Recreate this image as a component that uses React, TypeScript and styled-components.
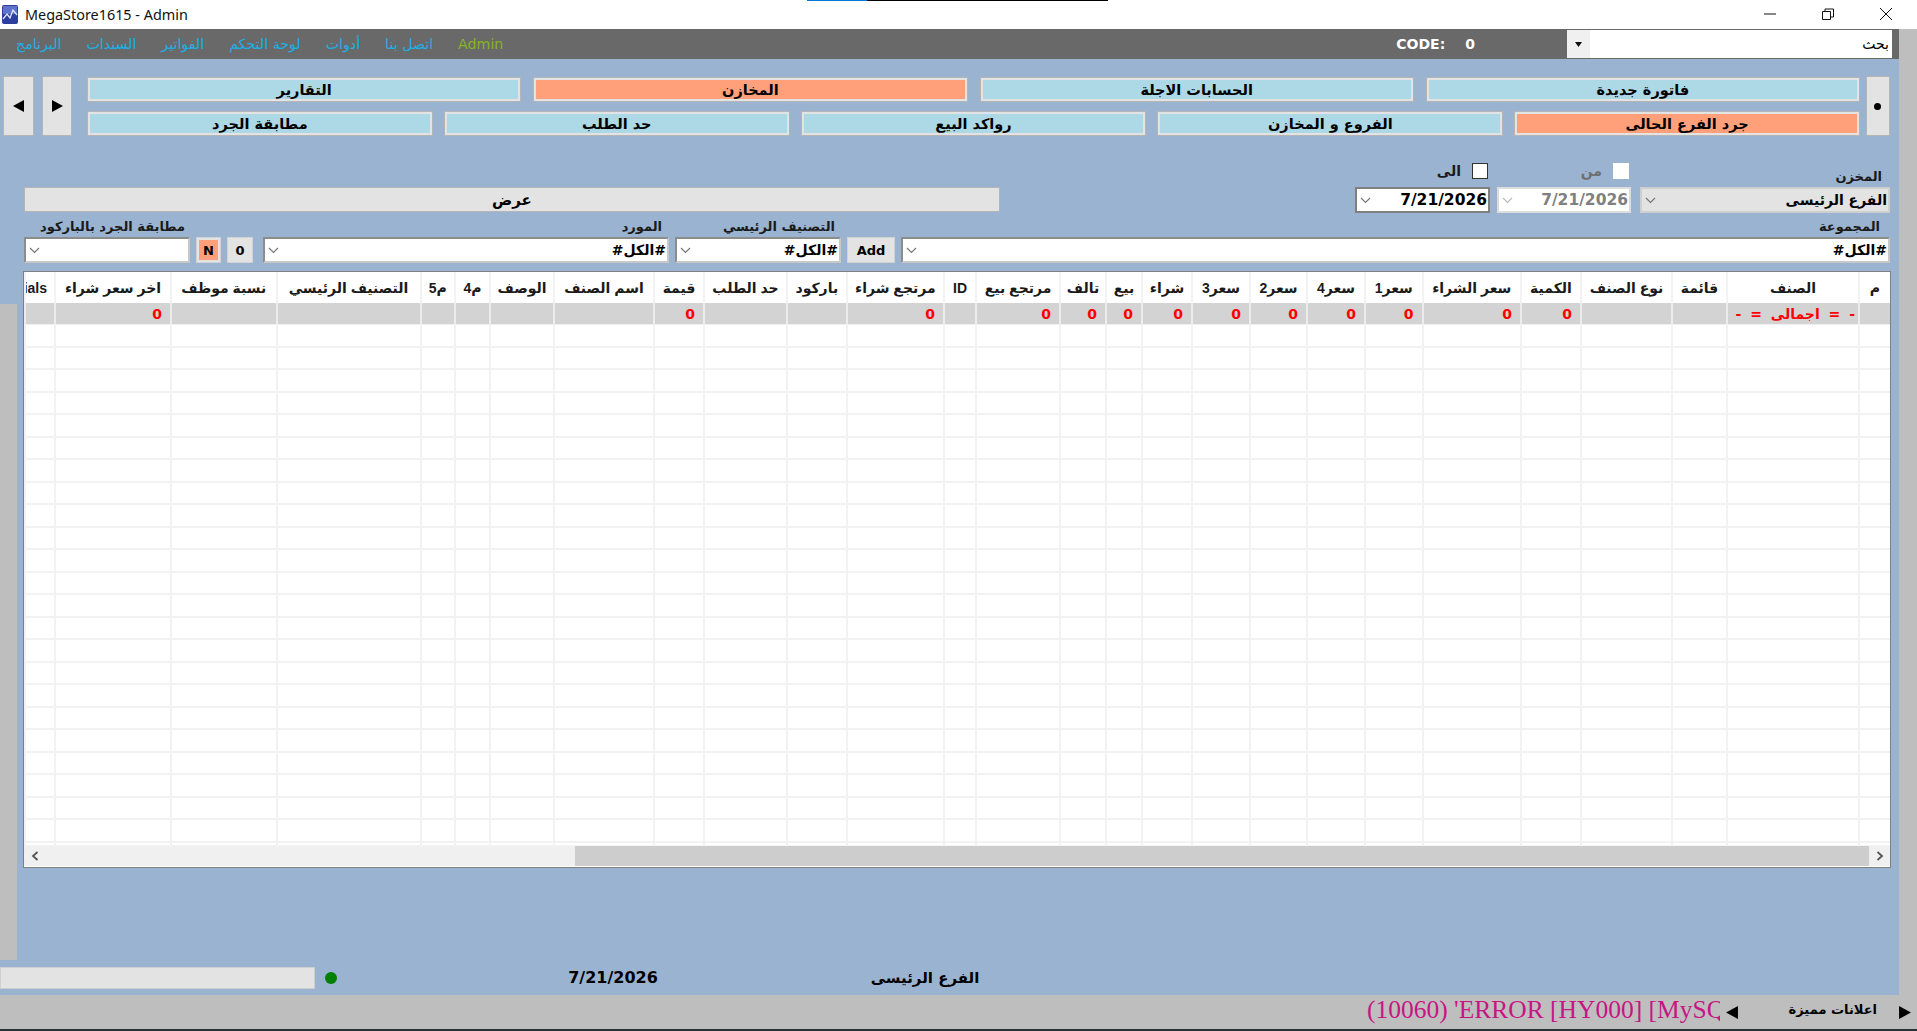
import React from 'react'
import styled, { createGlobalStyle } from 'styled-components'

const UI_FONT = '"DejaVu Sans", "Noto Sans", sans-serif'

// column widths, right to left like the grid on screen
const COLUMNS: { title: string; width: number; total?: string; inset?: number }[] = [
  { title: 'م', width: 32 },
  { title: 'الصنف', width: 132, total: '- = اجمالى = -' },
  { title: 'قائمة', width: 55 },
  { title: 'نوع الصنف', width: 91 },
  { title: 'الكمية', width: 60, total: '0' },
  { title: 'سعر الشراء', width: 98.5, total: '0' },
  { title: 'سعر1', width: 57.5, total: '0' },
  { title: 'سعر4', width: 58, total: '0' },
  { title: 'سعر2', width: 57, total: '0' },
  { title: 'سعر3', width: 58, total: '0' },
  { title: 'شراء', width: 50, total: '0' },
  { title: 'بيع', width: 36, total: '0' },
  { title: 'تالف', width: 46, total: '0' },
  { title: 'مرتجع بيع', width: 84, total: '0' },
  { title: 'ID', width: 32 },
  { title: 'مرتجع شراء', width: 97.4, total: '0' },
  { title: 'باركود', width: 59.6 },
  { title: 'حد الطلب', width: 83 },
  { title: 'قيمة', width: 50, total: '0' },
  { title: 'اسم الصنف', width: 100 },
  { title: 'الوصف', width: 64 },
  { title: 'م4', width: 35 },
  { title: 'م5', width: 34.5 },
  { title: 'التصنيف الرئيسي', width: 144 },
  { title: 'نسبة موظف', width: 105.5 },
  { title: 'اخر سعر شراء', width: 116, total: '0' },
  { title: 'Materials', width: 30, inset: 7 },
]

const GRID_TEMPLATE = COLUMNS.map((c) => `${c.width}px`).join(' ')
const EMPTY_ROWS = Array.from({ length: 24 }, (_, i) => i)

const MENU = ['البرنامج', 'السندات', 'الفواتير', 'لوحة التحكم', 'أدوات', 'اتصل بنا']

const Chevron = ({ tone = '#777' }: { tone?: string }) => (
  <svg width="11" height="7" viewBox="0 0 11 7" fill="none">
    <path d="M1 1l4.5 4.5L10 1" stroke={tone} strokeWidth="1.2" />
  </svg>
)

const Triangle = ({ left, size = 11 }: { left?: boolean; size?: number }) => (
  <svg width={size} height={size + 1} viewBox="0 0 11 12">
    <path d={left ? 'M11 0v12L0 6z' : 'M0 0v12l11-6z'} fill="#000" />
  </svg>
)

const App = () => {
  return (
    <Page>
      <GlobalStyle />
      <TitleBar>
        <ProgressMark />
        <svg width="16" height="19" viewBox="0 0 16 19">
          <rect width="16" height="19" rx="2" fill="#2d3f9e" />
          <rect x="1" y="1" width="14" height="8" fill="#5f73c9" />
          <path d="M1 14l4-5 3 4 3-8 4 5" stroke="#dfe6ff" strokeWidth="1.3" fill="none" />
        </svg>
        <AppTitle>MegaStore1615 - Admin</AppTitle>
        <WindowButtons>
          <svg width="14" height="14" viewBox="0 0 14 14">
            <path d="M1 7h12" stroke="#111" />
          </svg>
          <svg width="14" height="14" viewBox="0 0 14 14" fill="none">
            <path d="M1.5 4.5h8v8h-8zM4 4.5V2h8.5v8H9.5" stroke="#111" />
          </svg>
          <svg width="14" height="14" viewBox="0 0 14 14">
            <path d="M1 1l12 12M13 1L1 13" stroke="#111" />
          </svg>
        </WindowButtons>
      </TitleBar>

      <Main>
        <Workspace>
          <MenuBar>
            {MENU.map((item) => (
              <MenuItem key={item}>{item}</MenuItem>
            ))}
            <MenuItem $admin>Admin</MenuItem>
            <CodeBox>
              <span>CODE:</span>
              <span>0</span>
            </CodeBox>
            <SearchBox>
              <SearchArrow>
                <svg width="7" height="5" viewBox="0 0 7 5">
                  <path d="M0 0h7L3.5 5z" fill="#111" />
                </svg>
              </SearchArrow>
              <SearchText>بحث</SearchText>
            </SearchBox>
          </MenuBar>

          <Toolbar>
            <NavButton $width={31}>
              <Triangle left />
            </NavButton>
            <NavButton $width={30}>
              <Triangle />
            </NavButton>
            <ButtonRows>
              <ButtonRow $gap={12}>
                <ActionButton>فاتورة جديدة</ActionButton>
                <ActionButton>الحسابات الاجلة</ActionButton>
                <ActionButton $active>المخازن</ActionButton>
                <ActionButton>التقارير</ActionButton>
              </ButtonRow>
              <ButtonRow $gap={11}>
                <ActionButton $active>جرد الفرع الحالى</ActionButton>
                <ActionButton>الفروع و المخازن</ActionButton>
                <ActionButton>رواكد البيع</ActionButton>
                <ActionButton>حد الطلب</ActionButton>
                <ActionButton>مطابقة الجرد</ActionButton>
              </ButtonRow>
            </ButtonRows>
            <SideButton>
              <Bullet />
            </SideButton>
          </Toolbar>

          <DateRow>
            <ShowButton>عرض</ShowButton>
            <Field $width={135} $left="auto">
              <CheckLabel>
                <CheckBox $dark />
                <CheckText>الى</CheckText>
              </CheckLabel>
              <Control $tone="date">
                <DateValue>7/21/2026</DateValue>
                <Chevron />
              </Control>
            </Field>
            <Field $width={134} $left="7px">
              <CheckLabel>
                <CheckBox />
                <CheckText $muted>من</CheckText>
              </CheckLabel>
              <Control $tone="soft">
                <DateValue $muted>7/21/2026</DateValue>
                <Chevron tone="#bbb" />
              </Control>
            </Field>
            <Field $width={250} $left="9px">
              <FieldLabel $pad={8}>المخزن</FieldLabel>
              <Control $tone="grey">
                <Value>الفرع الرئيسى</Value>
                <Chevron />
              </Control>
            </Field>
          </DateRow>

          <FilterRow>
            <Field $width={166}>
              <FieldLabel $pad={5}>مطابقة الجرد بالباركود</FieldLabel>
              <Control>
                <Value />
                <Chevron />
              </Control>
            </Field>
            <SmallButton $width={25} $left={6}>
              <NBadge>N</NBadge>
            </SmallButton>
            <SmallButton $width={26} $left={6}>
              0
            </SmallButton>
            <Field $width={406} $left="10px">
              <FieldLabel $pad={7}>المورد</FieldLabel>
              <Control>
                <Value>#الكل#</Value>
                <Chevron />
              </Control>
            </Field>
            <Field $width={166} $left="6px">
              <FieldLabel $pad={6}>التصنيف الرئيسي</FieldLabel>
              <Control>
                <Value>#الكل#</Value>
                <Chevron />
              </Control>
            </Field>
            <SmallButton $width={48} $left={6}>
              Add
            </SmallButton>
            <Field $width={989} $left="6px">
              <FieldLabel $pad={10}>المجموعة</FieldLabel>
              <Control>
                <Value>#الكل#</Value>
                <Chevron />
              </Control>
            </Field>
          </FilterRow>

          <TableSection>
            <LeftStrip />
            <TableFrame>
              <Viewport>
                <HeaderRow>
                  {COLUMNS.map((c) => (
                    <HeaderCell key={c.title} $inset={c.inset}>
                      {c.title}
                    </HeaderCell>
                  ))}
                </HeaderRow>
                <TotalRow>
                  {COLUMNS.map((c) => (
                    <TotalCell key={c.title} $label={c.total !== undefined && c.total !== '0'}>
                      {c.total}
                    </TotalCell>
                  ))}
                </TotalRow>
                {EMPTY_ROWS.map((r) => (
                  <BodyRow key={r}>
                    {COLUMNS.map((c) => (
                      <BodyCell key={c.title} />
                    ))}
                  </BodyRow>
                ))}
              </Viewport>
              <ScrollBar>
                <ScrollArrow>
                  <svg width="8" height="10" viewBox="0 0 8 10" fill="none">
                    <path d="M6.5 1L2 5l4.5 4" stroke="#555" strokeWidth="1.8" />
                  </svg>
                </ScrollArrow>
                <ScrollGap />
                <ScrollThumb />
                <ScrollArrow>
                  <svg width="8" height="10" viewBox="0 0 8 10" fill="none">
                    <path d="M1.5 1L6 5 1.5 9" stroke="#555" strokeWidth="1.8" />
                  </svg>
                </ScrollArrow>
              </ScrollBar>
            </TableFrame>
          </TableSection>

          <StatusRow>
            <StatusField />
            <StatusDot />
            <DateStatus>7/21/2026</DateStatus>
            <BranchStatus>الفرع الرئيسى</BranchStatus>
          </StatusRow>
        </Workspace>
        <RightRail />
      </Main>

      <AdStrip>
        <Ticker>(10060) 'ERROR [HY000] [MySQL</Ticker>
        <Triangle left size={12} />
        <AdLabel>اعلانات مميزة</AdLabel>
        <Triangle size={12} />
      </AdStrip>
      <BottomEdge />
    </Page>
  )
}

const GlobalStyle = createGlobalStyle`
  html, body {
    margin: 0;
    padding: 0;
    background: #fff;
    overflow: hidden;
  }

  * {
    box-sizing: border-box;
  }
`

const Page = styled.div`
  width: 1917px;
  height: 1031px;
  display: flex;
  flex-direction: column;
  overflow: hidden;
  font-family: ${UI_FONT};
  color: #000;
`

const TitleBar = styled.div`
  position: relative;
  height: 29px;
  flex: none;
  display: flex;
  align-items: center;
  padding: 0 24px 1px 2px;
  background: #fff;
`

const ProgressMark = styled.div`
  position: absolute;
  top: 0;
  left: 807px;
  width: 301px;
  height: 1px;
  background: linear-gradient(to right, #0078d7 60px, #000 60px);
`

const AppTitle = styled.span`
  margin-left: 7px;
  font-family: "Noto Sans", sans-serif;
  font-size: 14.4px;
  color: #111;
`

const WindowButtons = styled.div`
  margin-left: auto;
  display: flex;
  gap: 44px;
`

const Main = styled.div`
  flex: 1;
  display: flex;
  min-height: 0;
`

const Workspace = styled.div`
  flex: 1;
  display: flex;
  flex-direction: column;
  background: #9ab3d1;
`

const RightRail = styled.div`
  width: 18px;
  flex: none;
  background: #bebebe;
`

const MenuBar = styled.div`
  height: 30px;
  flex: none;
  display: flex;
  align-items: center;
  padding: 0 7px 0 16px;
  background: #696969;
  gap: 25px;
`

const MenuItem = styled.span<{ $admin?: boolean }>`
  font-size: 14.2px;
  line-height: 30px;
  color: ${(p) => (p.$admin ? '#86b521' : '#1cb0e6')};
`

const CodeBox = styled.div`
  margin-left: auto;
  margin-right: 92px;
  display: flex;
  gap: 20px;
  font-size: 14px;
  font-weight: bold;
  color: #fff;
`

const SearchBox = styled.div`
  width: 325px;
  height: 28px;
  margin-left: -25px;
  display: flex;
  align-items: center;
  background: #fff;
`

const SearchArrow = styled.div`
  width: 23px;
  height: 100%;
  flex: none;
  display: flex;
  align-items: center;
  justify-content: center;
  background: #f0f0f0;
`

const SearchText = styled.span`
  flex: 1;
  padding-right: 3px;
  text-align: right;
  font-size: 14px;
  direction: rtl;
`

const Toolbar = styled.div`
  display: flex;
  height: 60px;
  margin-top: 17px;
  padding: 0 9px 0 3px;
`

const NavButton = styled.div<{ $width: number }>`
  width: ${(p) => p.$width}px;
  margin-right: 8px;
  display: flex;
  align-items: center;
  justify-content: center;
  background: #e3e3e3;
  border: 1px solid #b5b5b5;
`

const ButtonRows = styled.div`
  flex: 1;
  margin-left: 7px;
  padding-top: 1px;
  display: flex;
  flex-direction: column;
  gap: 9px;
`

const ButtonRow = styled.div<{ $gap: number }>`
  display: flex;
  direction: rtl;
  gap: ${(p) => p.$gap}px;
  height: 25px;
`

const ActionButton = styled.div<{ $active?: boolean }>`
  flex: 1;
  display: flex;
  align-items: center;
  justify-content: center;
  background: ${(p) => (p.$active ? '#ffa07a' : '#add8e6')};
  border: 3px solid #e3e3e3;
  outline: 1px solid #b5b5b5;
  outline-offset: -1px;
  font-size: 14.5px;
  font-weight: bold;
  white-space: nowrap;
`

const SideButton = styled(NavButton).attrs({ $width: 24 })`
  margin: 0 0 0 6px;
`

const Bullet = styled.div`
  width: 7px;
  height: 7px;
  margin-right: 2px;
  border-radius: 50%;
  background: #000;
`

const DateRow = styled.div`
  display: flex;
  align-items: flex-end;
  height: 50px;
  margin-top: 27px;
  padding: 0 9px 0 24px;
`

const ShowButton = styled.div`
  width: 976px;
  height: 25px;
  margin-bottom: 1px;
  display: flex;
  align-items: center;
  justify-content: center;
  background: #e3e3e3;
  border: 1px solid #b5b5b5;
  font-size: 15px;
  font-weight: bold;
`

const Field = styled.div<{ $width: number; $left?: string }>`
  width: ${(p) => p.$width}px;
  margin-left: ${(p) => p.$left ?? '0'};
  flex: none;
  display: flex;
  flex-direction: column;
`

const FieldLabel = styled.div<{ $pad: number }>`
  height: 18px;
  padding-right: ${(p) => p.$pad}px;
  direction: rtl;
  font-size: 13px;
  font-weight: bold;
  line-height: 16px;
  color: #1a1a1a;
  white-space: nowrap;
`

const CheckLabel = styled.div`
  height: 24px;
  display: flex;
  align-items: flex-start;
  direction: rtl;
`

const CheckBox = styled.div<{ $dark?: boolean }>`
  width: 16px;
  height: 16px;
  margin-right: 2px;
  background: #fff;
  border: 1px solid ${(p) => (p.$dark ? '#333' : '#fff')};
`

const CheckText = styled.span<{ $muted?: boolean }>`
  margin-right: 11px;
  font-size: 14px;
  font-weight: bold;
  line-height: 16px;
  color: ${(p) => (p.$muted ? '#6f6f6f' : '#1a1a1a')};
`

const CONTROL_TONES = {
  plain: 'background: #fff; border: 2px solid #8c8c8c; border-bottom-color: #c8c8c8; border-right-color: #c8c8c8;',
  date: 'background: #fff; border: 2px solid #808080;',
  soft: 'background: #fff; border: 2px solid #dcdcdc;',
  grey: 'background: #e3e3e3; border: 2px solid #cfcfcf;',
}

const Control = styled.div<{ $tone?: keyof typeof CONTROL_TONES }>`
  height: 26px;
  display: flex;
  align-items: center;
  justify-content: space-between;
  direction: rtl;
  padding: 0 1px 0 3px;
  ${(p) => CONTROL_TONES[p.$tone ?? 'plain']}
`

const Value = styled.span`
  font-size: 14px;
  font-weight: bold;
  white-space: nowrap;
`

const DateValue = styled.span<{ $muted?: boolean }>`
  font-size: 15.5px;
  font-weight: bold;
  color: ${(p) => (p.$muted ? '#808080' : '#000')};
`

const FilterRow = styled.div`
  display: flex;
  align-items: flex-end;
  margin-top: 6px;
  padding: 0 9px 0 24px;
`

const SmallButton = styled.div<{ $width: number; $left: number }>`
  width: ${(p) => p.$width}px;
  height: 26px;
  margin-left: ${(p) => p.$left}px;
  flex: none;
  display: flex;
  align-items: center;
  justify-content: center;
  background: #e3e3e3;
  border: 1px solid #d2d2d2;
  font-size: 13px;
  font-weight: bold;
`

const NBadge = styled.span`
  width: 19px;
  height: 20px;
  display: flex;
  align-items: center;
  justify-content: center;
  background: #ffa07a;
`

const TableSection = styled.div`
  height: 689px;
  flex: none;
  margin-top: 8px;
  display: flex;
  align-items: flex-start;
  padding-right: 8px;
`

const LeftStrip = styled.div`
  width: 17px;
  height: 656px;
  margin: 33px 6px 0 0;
  flex: none;
  background: #bebebe;
`

const TableFrame = styled.div`
  width: 1868px;
  height: 597px;
  display: flex;
  flex-direction: column;
  background: #fff;
  border: 1px solid #808080;
`

const Viewport = styled.div`
  height: 574px;
  flex: none;
  overflow: hidden;
  border-bottom: 1px solid #f4f4f4;
`

const GridRow = styled.div`
  display: grid;
  grid-template-columns: ${GRID_TEMPLATE};
  direction: rtl;
`

const HeaderRow = styled(GridRow)`
  height: 31px;
`

const TotalRow = styled(GridRow)`
  height: 21px;
  background: #d3d3d3;
  border-bottom: 1px solid #f0f0f0;
  box-sizing: content-box;
`

const BodyRow = styled(GridRow)`
  height: 22.5px;
  border-bottom: 2px solid #f2f2f2;
`

const HeaderCell = styled.div<{ $inset?: number }>`
  overflow: hidden;
  padding: 0 ${(p) => p.$inset ?? 3}px 0 3px;
  border-left: 2px solid #f2f2f2;
  text-align: center;
  font-family: "Liberation Sans", ${UI_FONT};
  font-size: 14px;
  font-weight: bold;
  line-height: 33px;
  color: #1a1a1a;
  white-space: nowrap;
`

const TotalCell = styled.div<{ $label?: boolean }>`
  overflow: hidden;
  padding: 0 ${(p) => (p.$label ? 3 : 8)}px;
  border-left: 2px solid #ececec;
  font-size: 14px;
  font-weight: bold;
  word-spacing: ${(p) => (p.$label ? 4 : 0)}px;
  line-height: 22px;
  color: #f00;
  white-space: nowrap;
`

const BodyCell = styled.div`
  border-left: 2px solid #f2f2f2;
`

const ScrollBar = styled.div`
  height: 20px;
  flex: none;
  display: flex;
  background: #f0f0f0;
`

const ScrollArrow = styled.div`
  width: 21px;
  flex: none;
  display: flex;
  align-items: center;
  justify-content: center;
`

const ScrollGap = styled.div`
  width: 530px;
  flex: none;
`

const ScrollThumb = styled.div`
  flex: 1;
  background: #cdcdcd;
`

const StatusRow = styled.div`
  flex: 1;
  display: flex;
  align-items: flex-start;
  padding-top: 7px;
`

const StatusField = styled.div`
  width: 315px;
  height: 22px;
  background: #e3e3e3;
  border: 1px solid #cfcfcf;
`

const StatusDot = styled.div`
  width: 12px;
  height: 12px;
  margin: 5px 0 0 10px;
  border-radius: 50%;
  background: #008000;
`

const DateStatus = styled.div`
  width: 200px;
  margin-left: 176px;
  text-align: center;
  font-size: 16px;
  font-weight: bold;
  line-height: 22px;
`

const BranchStatus = styled(DateStatus)`
  margin-left: 112px;
  font-size: 15px;
  direction: rtl;
`

const AdStrip = styled.div`
  height: 34px;
  flex: none;
  display: flex;
  align-items: center;
  justify-content: flex-end;
  padding-right: 6px;
  background: #bebebe;
`

const Ticker = styled.div`
  width: 353px;
  margin: 0 6px 5px 0;
  overflow: hidden;
  font-family: "Liberation Serif", serif;
  font-size: 25.5px;
  color: #c71585;
  white-space: nowrap;
`

const AdLabel = styled.div`
  width: 161px;
  padding: 0 22px 5px 0;
  direction: rtl;
  font-size: 13px;
  font-weight: bold;
  white-space: nowrap;
`

const BottomEdge = styled.div`
  height: 2px;
  flex: none;
  background: #26333a;
`

export default App
